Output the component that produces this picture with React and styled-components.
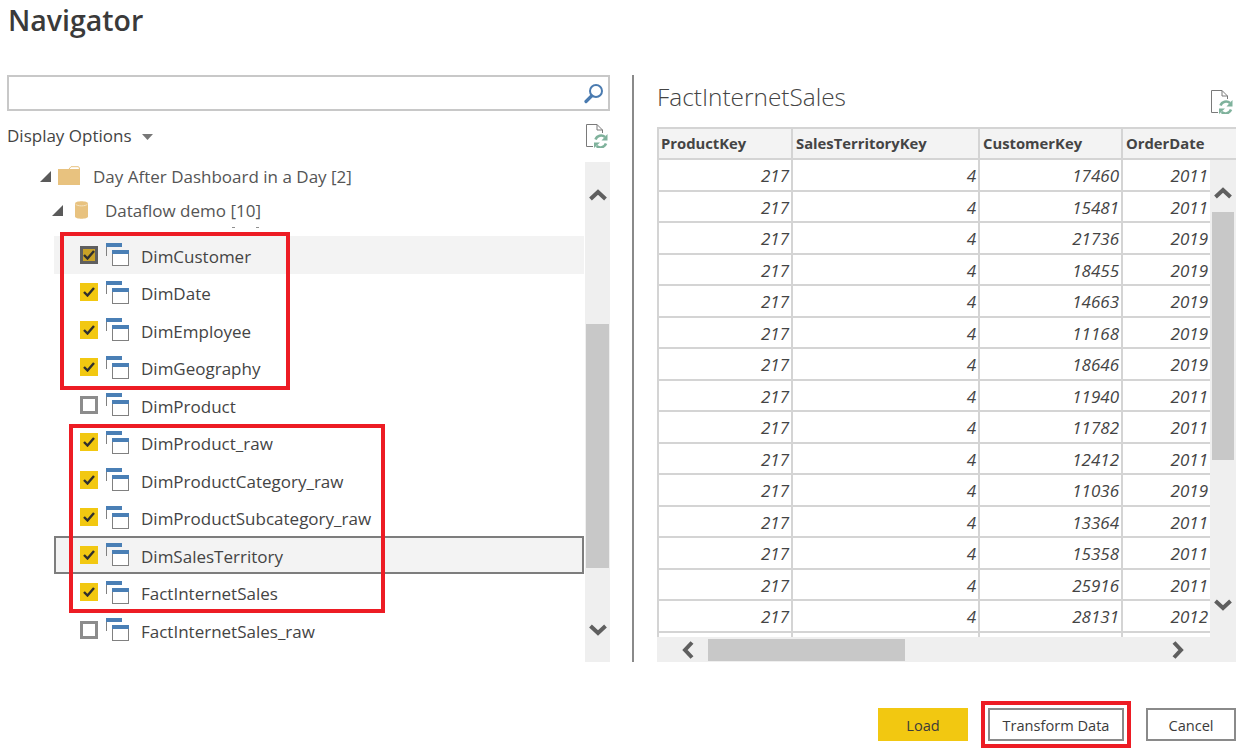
import React from 'react';
import styled, { createGlobalStyle } from 'styled-components';

const TREE_ROWS = [
  { name: 'DimCustomer', state: 'focus' },
  { name: 'DimDate', state: 'on' },
  { name: 'DimEmployee', state: 'on' },
  { name: 'DimGeography', state: 'on' },
  { name: 'DimProduct', state: 'off' },
  { name: 'DimProduct_raw', state: 'on' },
  { name: 'DimProductCategory_raw', state: 'on' },
  { name: 'DimProductSubcategory_raw', state: 'on' },
  { name: 'DimSalesTerritory', state: 'on', selected: true },
  { name: 'FactInternetSales', state: 'on' },
  { name: 'FactInternetSales_raw', state: 'off' },
];

const TABLE_ROWS = [
  [17460, 2011], [15481, 2011], [21736, 2019], [18455, 2019], [14663, 2019],
  [11168, 2019], [18646, 2019], [11940, 2011], [11782, 2011], [12412, 2011],
  [11036, 2019], [13364, 2011], [15358, 2011], [25916, 2011], [28131, 2012], [0, 0],
];

const COLUMNS = ['ProductKey', 'SalesTerritoryKey', 'CustomerKey', 'OrderDate'];

export default function App() {
  return (
    <>
      <GlobalStyle />
      <Dialog>
        <Title>Navigator</Title>
        <Body>
          <LeftPane>
            <SearchBox>
              <SearchIcon />
            </SearchBox>
            <OptionsBar>
              <DisplayOptions>Display Options <Caret /></DisplayOptions>
              <RefreshIcon />
            </OptionsBar>
            <TreeArea>
              <Tree>
                <Folder>
                  <Expander />
                  <FolderIcon />
                  <FolderLabel>Day After Dashboard in a Day [2]</FolderLabel>
                </Folder>
                <Workspace>
                  <Expander />
                  <CylinderIcon />
                  <WorkspaceLabel>Dataflow demo [10]</WorkspaceLabel>
                </Workspace>
                <Rows>
                  <Tick $left={225} />
                  <Tick $left={249} />
                  {TREE_ROWS.map((row) => (
                    <Row key={row.name} $focus={row.state === 'focus'} $selected={row.selected}>
                      <CheckBox $state={row.state}>
                        {row.state !== 'off' && <CheckMark />}
                      </CheckBox>
                      <TableIcon />
                      <RowLabel>{row.name}</RowLabel>
                    </Row>
                  ))}
                  <RedBox $left={53} $top={-4} $width={230} $height={158} />
                  <RedBox $left={62} $top={188} $width={316} $height={189} />
                </Rows>
              </Tree>
              <TreeScroll>
                <ChevronUp />
                <TreeThumb />
                <ChevronDown />
              </TreeScroll>
            </TreeArea>
          </LeftPane>
          <Divider />
          <RightPane>
            <PreviewHead>
              <PreviewTitle>FactInternetSales</PreviewTitle>
              <RefreshIcon />
            </PreviewHead>
            <Grid>
              <HeaderRow>
                {COLUMNS.map((c) => <HeaderCell key={c}>{c}</HeaderCell>)}
              </HeaderRow>
              <GridMiddle>
                <GridBody>
                  {TABLE_ROWS.map((r, i) => (
                    <BodyRow key={i}>
                      <Cell>{r[0] ? 217 : ''}</Cell>
                      <Cell>{r[0] ? 4 : ''}</Cell>
                      <Cell>{r[0] || ''}</Cell>
                      <Cell>{r[1] || ''}</Cell>
                    </BodyRow>
                  ))}
                </GridBody>
                <TableVScroll>
                  <ChevronUp />
                  <TableThumb />
                  <ChevronDown />
                </TableVScroll>
              </GridMiddle>
              <HScroll>
                <ChevronLeft />
                <HThumb />
                <ChevronRight />
              </HScroll>
            </Grid>
          </RightPane>
        </Body>
        <Footer>
          <PrimaryButton>Load</PrimaryButton>
          <Highlight>
            <Button>Transform Data</Button>
          </Highlight>
          <Button>Cancel</Button>
        </Footer>
      </Dialog>
    </>
  );
}

function SearchIcon() {
  return (
    <IconSvg width="20" height="21" viewBox="0 0 20 21">
      <circle cx="12" cy="8" r="6" fill="none" stroke="#4a7bb0" strokeWidth="2" />
      <path d="M7.5 13 L2 18.5" stroke="#4a7bb0" strokeWidth="3.2" strokeLinecap="round" />
    </IconSvg>
  );
}

function RefreshIcon() {
  return (
    <RefreshSvg width="22" height="24" viewBox="0 0 22 24">
      <path d="M7 22.500 H0.500 V0.500 H11 L16.500 6 V9 M11 0.500 V6 H16.500" fill="none" stroke="#7a7a7a" />
      <path d="M9.500 15.500 a6 6 0 0 1 9.500 -2.500 M20 19.500 a6 6 0 0 1 -9.500 2.500" fill="none" stroke="#7fb29c" strokeWidth="2.600" />
      <path d="M21.500 10 V16.500 H15.500 Z M8 24 V18.500 H14 Z" fill="#7fb29c" />
    </RefreshSvg>
  );
}

function FolderIcon() {
  return (
    <FolderSvg width="22" height="19" viewBox="0 0 22 19">
      <path d="M0 3 H22 V19 H0 Z" fill="#e8c27f" />
      <path d="M11 3 L13 0.700 H20 Q21.500 0.700 21.500 3" fill="#fff" stroke="#e8c27f" />
    </FolderSvg>
  );
}

function CylinderIcon() {
  return (
    <CylinderSvg width="13" height="18" viewBox="0 0 13 18">
      <path d="M0 2.500 C0 -0.500 13 -0.500 13 2.500 V15.500 C13 18.500 0 18.500 0 15.500 Z" fill="#e8c27f" />
      <path d="M0.500 3 C2 5.500 11 5.500 12.500 3" fill="none" stroke="#f5e3c0" />
    </CylinderSvg>
  );
}

function Expander() {
  return (
    <IconSvg width="11" height="11" viewBox="0 0 11 11">
      <path d="M0 11 H11 V0 Z" fill="#5a5a5a" />
    </IconSvg>
  );
}

function Caret() {
  return (
    <CaretSvg width="11" height="6" viewBox="0 0 11 6">
      <path d="M0 0 H11 L5.500 6 Z" fill="#777" />
    </CaretSvg>
  );
}

function CheckMark() {
  return (
    <svg width="12" height="10" viewBox="0 0 12 10">
      <path d="M1 5 L4.500 8.500 L11 1" fill="none" stroke="#2f2f2f" strokeWidth="2.400" />
    </svg>
  );
}

function TableIcon() {
  return (
    <TableSvg width="23" height="23" viewBox="0 0 23 23">
      <path d="M0.500 13 V0.500 H16" fill="none" stroke="#808080" />
      <rect x="0" y="0" width="16" height="4" fill="#4a7fb5" />
      <rect x="6.500" y="7.500" width="16" height="15" fill="#fff" stroke="#808080" />
      <rect x="6" y="7" width="17" height="4" fill="#4a7fb5" />
    </TableSvg>
  );
}

function ChevronUp() {
  return (
    <IconSvg width="18" height="12" viewBox="0 0 18 12">
      <path d="M1.500 10 L9 3 L16.500 10" fill="none" stroke="#5f5f5f" strokeWidth="4" />
    </IconSvg>
  );
}

function ChevronDown() {
  return (
    <IconSvg width="18" height="12" viewBox="0 0 18 12">
      <path d="M1.500 2 L9 9 L16.500 2" fill="none" stroke="#5f5f5f" strokeWidth="4" />
    </IconSvg>
  );
}

function ChevronLeft() {
  return (
    <IconSvg width="12" height="18" viewBox="0 0 12 18">
      <path d="M10 1.500 L3 9 L10 16.500" fill="none" stroke="#5f5f5f" strokeWidth="4" />
    </IconSvg>
  );
}

function ChevronRight() {
  return (
    <RightArrow width="12" height="18" viewBox="0 0 12 18">
      <path d="M2 1.500 L9 9 L2 16.500" fill="none" stroke="#5f5f5f" strokeWidth="4" />
    </RightArrow>
  );
}

const GlobalStyle = createGlobalStyle`
  html, body {
    margin: 0;
    background: #fff;
    overflow: hidden;
  }
  body {
    font-family: "Open Sans", "Noto Sans", sans-serif;
    color: #3b3b3b;
  }
`;

const Dialog = styled.div`
  width: 1247px;
  height: 755px;
  position: relative;
  overflow: hidden;
`;

const Title = styled.h1`
  margin: 0;
  height: 75px;
  padding-left: 8px;
  font-size: 28.500px;
  line-height: 40px;
  font-weight: 600;
  color: #3a3a3a;
`;

const Body = styled.div`
  display: flex;
  height: 587px;
`;

const LeftPane = styled.div`
  width: 603px;
  margin-left: 7px;
  display: flex;
  flex-direction: column;
`;

const SearchBox = styled.div`
  height: 36px;
  flex: none;
  box-sizing: border-box;
  border: 2px solid #c8c8c8;
  display: flex;
  align-items: center;
  justify-content: flex-end;
  padding-right: 4px;
`;

const IconSvg = styled.svg`
  flex: none;
  display: block;
`;

const RefreshSvg = styled(IconSvg)`
  margin-top: -2px;
`;

const OptionsBar = styled.div`
  height: 51px;
  flex: none;
  display: flex;
  align-items: center;
  justify-content: space-between;
  padding-right: 2px;
`;

const DisplayOptions = styled.div`
  font-size: 17px;
  color: #444;
  margin-top: -2px;
`;

const CaretSvg = styled.svg`
  margin-left: 6px;
  vertical-align: 2px;
`;

const TreeArea = styled.div`
  flex: 1;
  display: flex;
  min-height: 0;
`;

const Tree = styled.div`
  width: 578px;
`;

const Folder = styled.div`
  display: flex;
  align-items: center;
  height: 28px;
  padding-left: 33px;
  font-size: 17px;
  color: #555;
`;

const FolderSvg = styled(IconSvg)`
  margin-left: 7px;
  margin-top: -2px;
`;

const FolderLabel = styled.span`
  margin-left: 13px;
`;

const Workspace = styled(Folder)`
  margin-top: 6px;
  padding-left: 45px;
`;

const CylinderSvg = styled(IconSvg)`
  margin-left: 12px;
`;

const WorkspaceLabel = styled.span`
  margin-left: 17px;
`;

const Rows = styled.div`
  position: relative;
  margin-top: 12px;
`;

const Tick = styled.span`
  position: absolute;
  left: ${(p) => p.$left}px;
  top: -9px;
  width: 3px;
  height: 1px;
  background: #8f8f8f;
`;

const Row = styled.div`
  height: 37.500px;
  box-sizing: border-box;
  margin-left: 47px;
  width: 530px;
  display: flex;
  align-items: center;
  padding-left: ${(p) => (p.$selected ? 24 : 26)}px;
  background: ${(p) => (p.$focus || p.$selected ? '#f3f3f3' : 'transparent')};
  border: ${(p) => (p.$selected ? '2px solid #7d7d7d' : 'none')};
`;

const CheckBox = styled.div`
  width: 18px;
  height: 18px;
  box-sizing: border-box;
  flex: none;
  display: flex;
  align-items: center;
  justify-content: center;
  background: ${(p) => ({ on: '#f2c811', focus: '#c9a227', off: '#fff' }[p.$state])};
  border: ${(p) => (p.$state === 'on' ? 'none' : `3px solid ${p.$state === 'focus' ? '#5f5f5f' : '#8c8c8c'}`)};
`;

const TableSvg = styled(IconSvg)`
  margin-left: 8px;
`;

const RowLabel = styled.span`
  margin-left: 12px;
  margin-top: 3px;
  font-size: 17px;
  color: #444;
`;

const RedBox = styled.div`
  position: absolute;
  left: ${(p) => p.$left}px;
  top: ${(p) => p.$top}px;
  width: ${(p) => p.$width}px;
  height: ${(p) => p.$height}px;
  box-sizing: border-box;
  border: 4px solid #ed1c24;
  pointer-events: none;
`;

const TreeScroll = styled.div`
  width: 25px;
  height: 500px;
  background: #efefef;
  display: flex;
  flex-direction: column;
  align-items: center;
  padding-top: 27px;
  box-sizing: border-box;
  & > svg:last-child {
    margin-top: 56px;
  }
`;

const TreeThumb = styled.div`
  width: 23px;
  height: 244px;
  margin-top: 123px;
  background: #c8c8c8;
`;

const Divider = styled.div`
  width: 2px;
  margin-left: 22px;
  margin-right: 23px;
  background: #8a8a8a;
`;

const RightPane = styled.div`
  width: 579px;
  display: flex;
  flex-direction: column;
`;

const PreviewHead = styled.div`
  height: 52px;
  display: flex;
  align-items: flex-start;
  justify-content: space-between;
  padding-right: 3px;
  & > svg {
    margin-top: 15px;
  }
`;

const PreviewTitle = styled.div`
  font-size: 24.400px;
  line-height: 44px;
  font-weight: 300;
  color: #444;
`;

const Grid = styled.div`
  height: 535px;
  display: flex;
  flex-direction: column;
`;

const HeaderRow = styled.div`
  display: grid;
  grid-template-columns: 134px 187px 143px 115px;
  height: 33px;
  flex: none;
  background: #f3f3f3;
  border-top: 2px solid #d4d4d4;
  border-bottom: 2px solid #d4d4d4;
  box-sizing: border-box;
`;

const HeaderCell = styled.div`
  border-left: 2px solid #d4d4d4;
  padding-left: 3px;
  font-size: 14.800px;
  font-weight: 700;
  line-height: 29px;
  color: #444;
  white-space: nowrap;
  &:first-child {
    padding-left: 2px;
  }
`;

const GridMiddle = styled.div`
  flex: 1;
  min-height: 0;
  display: flex;
`;

const GridBody = styled.div`
  width: 553px;
  overflow: hidden;
`;

const BodyRow = styled.div`
  display: grid;
  grid-template-columns: 134px 187px 143px 89px;
  height: 31.500px;
  box-sizing: border-box;
  border-bottom: 2px solid #d4d4d4;
`;

const Cell = styled.div`
  border-left: 2px solid #d4d4d4;
  padding-right: 2px;
  text-align: right;
  font-size: 17px;
  font-style: italic;
  line-height: 32px;
  overflow: hidden;
  color: #444;
`;

const TableVScroll = styled.div`
  width: 26px;
  flex: none;
  background: #efefef;
  display: flex;
  flex-direction: column;
  align-items: center;
  padding-top: 27px;
  box-sizing: border-box;
  & > svg:last-child {
    margin-top: 139px;
  }
`;

const TableThumb = styled.div`
  width: 22px;
  height: 248px;
  margin-top: 13px;
  background: #c8c8c8;
`;

const HScroll = styled.div`
  height: 25px;
  flex: none;
  background: #efefef;
  display: flex;
  align-items: center;
  padding: 0 52px 0 25px;
  box-sizing: border-box;
`;

const HThumb = styled.div`
  width: 197px;
  height: 22px;
  margin-left: 14px;
  background: #c8c8c8;
`;

const RightArrow = styled(IconSvg)`
  margin-left: auto;
`;

const Footer = styled.div`
  position: absolute;
  right: 11px;
  bottom: 7px;
  display: flex;
  align-items: center;
  gap: 15px;
`;

const Button = styled.div`
  width: 90px;
  height: 33px;
  box-sizing: border-box;
  border: 2px solid #8a8a8a;
  display: flex;
  align-items: center;
  justify-content: center;
  font-size: 14.600px;
  color: #3b3b3b;
  white-space: nowrap;
`;

const PrimaryButton = styled(Button)`
  background: #f2c811;
  border: none;
`;

const Highlight = styled.div`
  padding: 3px;
  margin-left: -2px;
  border: 4px solid #ed1c24;
  & > div {
    width: 136px;
  }
`;
